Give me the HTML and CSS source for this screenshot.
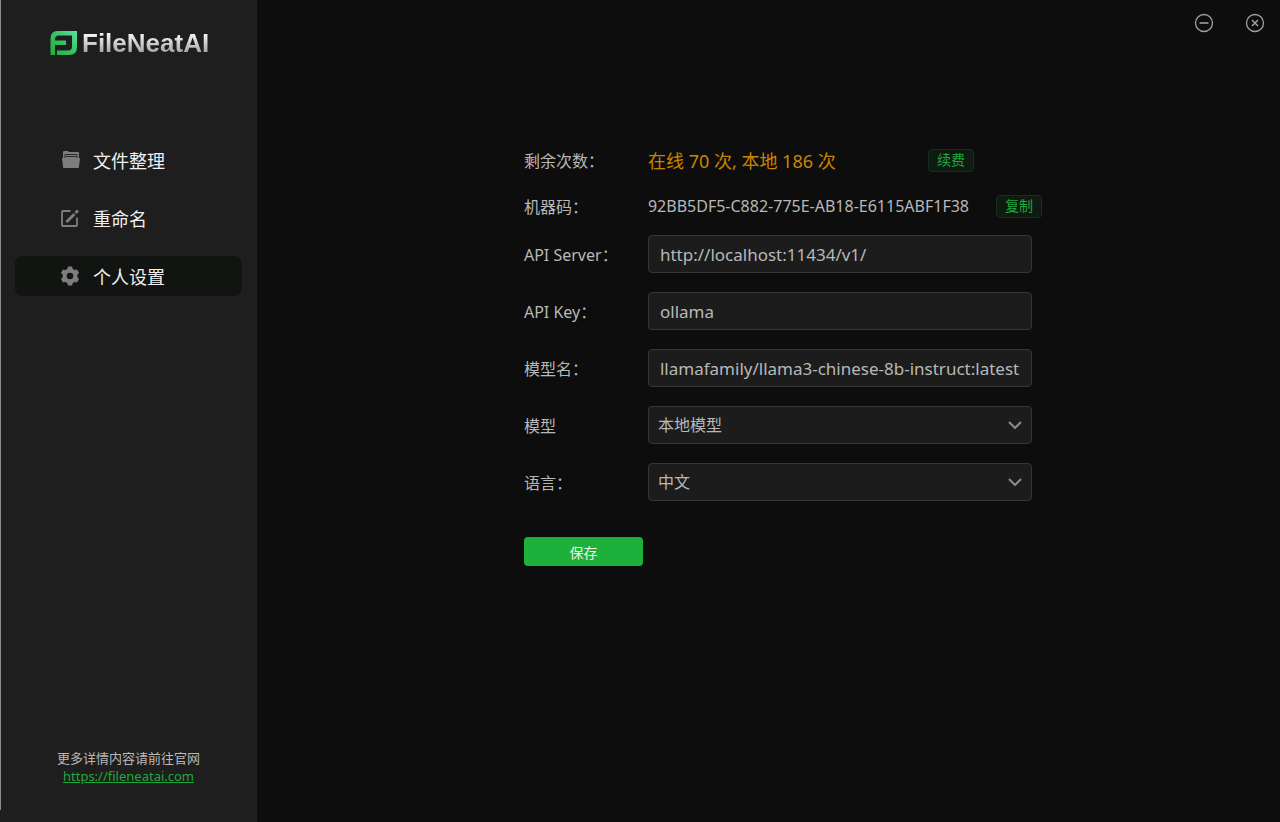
FILE: index.html
```
<!DOCTYPE html>
<html lang="zh-CN">
<head>
  <meta charset="UTF-8">
  <meta name="viewport" content="width=device-width, initial-scale=1.0">
  <title>FileNeatAI</title>
  <link rel="stylesheet" href="styles.css">
</head>
<body>
  <aside class="sidebar">
    <div class="logo">
      <svg width="28" height="26" viewBox="0 0 28 26" aria-hidden="true">
        <defs>
          <linearGradient id="logo-green" x1="0" y1="1" x2="1" y2="0">
            <stop offset="0" stop-color="#1fae3c"/>
            <stop offset="0.5" stop-color="#35c262"/>
            <stop offset="1" stop-color="#5fe0a0"/>
          </linearGradient>
        </defs>
        <path fill="url(#logo-green)" d="M7.500 1H27V17Q27 25 19 25H7V20.500H18Q22 20.500 22 16.500V5.500H9Q5 5.500 5 9.500V10.500H16V15H5V25H0.500V8.500Q0.500 1 7.500 1Z"/>
      </svg>
      <span class="logo-text">FileNeatAI</span>
    </div>
    <nav class="menu">
      <a href="#" class="menu-item">
        <svg width="20" height="20" viewBox="0 0 20 20" aria-hidden="true">
          <path fill="#7d7d7d" d="M3 2Q3 1 4 1H8L9 2H18Q19 2 19 3V9H3Z"/>
          <path stroke="#2b2b2b" d="M5 8V4.500H17V8M6 6.500H16" fill="none"/>
          <path fill="#7d7d7d" d="M2 8H20L19 17Q19 18 18 18H4Q3 18 3 17Z"/>
        </svg>
        <span>文件整理</span>
      </a>
      <a href="#" class="menu-item">
        <svg width="20" height="20" viewBox="0 0 20 20" fill="none" stroke="#7d7d7d" aria-hidden="true">
          <path stroke-width="1.800" d="M10.500 3H3Q2 3 2 4V17Q2 18 3 18H16Q17 18 17 17V9.500"/>
          <path stroke-width="3" d="M6.500 14L14.500 6M15.500 5L18 2.500"/>
        </svg>
        <span>重命名</span>
      </a>
      <a href="#" class="menu-item active">
        <svg width="20" height="20" viewBox="0 0 20 20" aria-hidden="true">
          <path fill="#7d7d7d" fill-rule="evenodd" d="M8 0.500H12L12.800 3L14.500 4L17 3.400L19 6.800L17.300 8.800V11L19 13L17 16.500L14.500 15.900L12.800 17L12 19.500H8L7.200 17L5.500 15.900L3 16.500L1 13L2.700 11V8.800L1 6.800L3 3.400L5.500 4L7.200 3ZM10 6.700A3.300 3.300 0 1 0 10 13.300A3.300 3.300 0 1 0 10 6.700Z"/>
        </svg>
        <span>个人设置</span>
      </a>
    </nav>
    <div class="more">
      <p>更多详情内容请前往官网</p>
      <a href="https://fileneatai.com">https://fileneatai.com</a>
    </div>
  </aside>

  <main class="content">
    <header class="window-bar">
      <button type="button" class="window-btn" aria-label="最小化">
        <svg width="20" height="20" viewBox="0 0 20 20" fill="none" stroke="#a0a0a0">
          <circle cx="10" cy="10" r="8.500" stroke-width="1.300"/>
          <path stroke-width="1.600" d="M5.500 10H14.500"/>
        </svg>
      </button>
      <button type="button" class="window-btn" aria-label="关闭">
        <svg width="20" height="20" viewBox="0 0 20 20" fill="none" stroke="#a0a0a0">
          <circle cx="10" cy="10" r="8.500" stroke-width="1.300"/>
          <path stroke-width="1.500" d="M7 7L13 13M13 7L7 13"/>
        </svg>
      </button>
    </header>

    <form class="settings">
      <div class="info-row">
        <span class="label">剩余次数：</span>
        <span class="count">在线 70 次, 本地 186 次</span>
        <button type="button" class="tag-btn">续费</button>
      </div>
      <div class="info-row">
        <span class="label">机器码：</span>
        <span class="machine">92BB5DF5-C882-775E-AB18-E6115ABF1F38</span>
        <button type="button" class="tag-btn">复制</button>
      </div>
      <div class="fields">
        <div class="form-row">
          <label class="label" for="server">API Server：</label>
          <input type="text" id="server" value="http://localhost:11434/v1/">
        </div>
        <div class="form-row">
          <label class="label" for="key">API Key：</label>
          <input type="text" id="key" value="ollama">
        </div>
        <div class="form-row">
          <label class="label" for="model-name">模型名：</label>
          <input type="text" id="model-name" value="llamafamily/llama3-chinese-8b-instruct:latest">
        </div>
        <div class="form-row">
          <label class="label" for="model">模型</label>
          <div class="select-box">
            <select id="model">
              <option>本地模型</option>
            </select>
            <svg width="14" height="8" viewBox="0 0 14 8" aria-hidden="true"><path d="M1 1L7 7L13 1"/></svg>
          </div>
        </div>
        <div class="form-row">
          <label class="label" for="language">语言：</label>
          <div class="select-box">
            <select id="language">
              <option>中文</option>
            </select>
            <svg width="14" height="8" viewBox="0 0 14 8" aria-hidden="true"><path d="M1 1L7 7L13 1"/></svg>
          </div>
        </div>
      </div>
      <button type="submit" class="save">保存</button>
    </form>
  </main>
</body>
</html>
```
FILE: styles.css
```
* {
  margin: 0;
  padding: 0;
  box-sizing: border-box;
}

body {
  display: flex;
  min-height: 100vh;
  background-color: #0d0d0d;
  color: #b8b8b8;
  font-family: "Noto Sans", "Noto Sans CJK SC", sans-serif;
  font-size: 16px;
}

button,
input,
select {
  font-family: inherit;
}

button {
  cursor: pointer;
}

.sidebar {
  display: flex;
  flex-direction: column;
  flex: none;
  width: 257px;
  padding: 28px 15px 37px;
  background: linear-gradient(#8a8a8a, #8a8a8a) 0 0 / 1px calc(100% - 12px) no-repeat #1e1e1e;
}

.logo {
  display: flex;
  align-items: center;
  gap: 4px;
  height: 30px;
  padding-left: 35px;
}

.logo-text {
  font-family: "Liberation Sans", sans-serif;
  font-size: 26px;
  font-weight: bold;
  line-height: 30px;
  color: transparent;
  background: linear-gradient(#f4f4f4 20%, #9c9c9c 90%);
  background-clip: text;
  -webkit-background-clip: text;
}

.menu {
  display: flex;
  flex-direction: column;
  gap: 18px;
  margin-top: 82px;
}

.menu-item {
  display: flex;
  align-items: center;
  gap: 13px;
  height: 40px;
  padding-left: 45px;
  border-radius: 8px;
  color: #f0f0f0;
  font-size: 18px;
  text-decoration: none;
}

.menu-item.active {
  background-color: #121411;
}

.more {
  margin-top: auto;
  text-align: center;
  font-size: 13px;
  line-height: 18px;
}

.more a {
  color: #20a83c;
}

.content {
  flex: 1;
  min-width: 0;
}

.window-bar {
  display: flex;
  justify-content: flex-end;
  gap: 31px;
  padding: 13px 15px 0;
}

.window-btn {
  width: 20px;
  height: 20px;
  border: none;
  background: none;
}

.settings {
  width: 50%;
  max-width: 508px;
  margin: 104px 0 0 calc(26% + 1px);
}

.info-row {
  display: flex;
  align-items: center;
  height: 46px;
  white-space: nowrap;
}

.label {
  flex: none;
  width: 124px;
}

.count {
  min-width: 262px;
  color: #cc8400;
  font-size: 18px;
}

.machine {
  min-width: 330px;
}

.tag-btn {
  flex: none;
  width: 46px;
  height: 23px;
  margin-left: 18px;
  border: 1px solid #12301a;
  border-radius: 4px;
  background-color: #0f1a11;
  color: #20a83c;
  font-size: 14px;
  line-height: 20px;
}

.fields {
  display: flex;
  flex-direction: column;
  gap: 19px;
  margin-top: 6px;
}

.form-row {
  display: flex;
  align-items: center;
}

.form-row input,
.form-row select {
  flex: 1;
  width: 100%;
  min-width: 0;
  height: 38px;
  padding: 0 8px 0 11px;
  border: 1px solid #363636;
  border-radius: 4px;
  outline: none;
  background-color: #1c1c1c;
  color: #b8b8b8;
  font-size: 17px;
}

.form-row select {
  appearance: none;
  padding-left: 9px;
  font-size: 16px;
}

.select-box {
  position: relative;
  flex: 1;
}

.select-box svg {
  position: absolute;
  top: 15px;
  right: 10px;
  fill: none;
  stroke: #8c8c8c;
  stroke-width: 2;
  pointer-events: none;
}

.save {
  width: 119px;
  height: 29px;
  margin-top: 36px;
  border: none;
  border-radius: 4px;
  background-color: #1db03a;
  color: #f0f0f0;
  font-size: 14px;
}
```
